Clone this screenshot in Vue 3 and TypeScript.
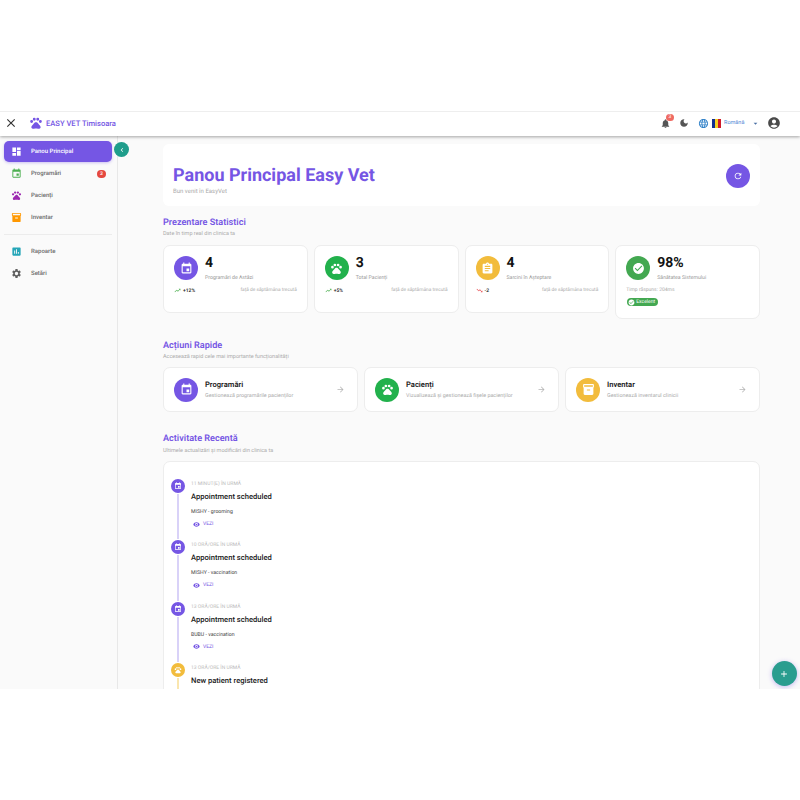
<script setup lang="ts">
const icons = {
  dashboard: 'M3 13h8V3H3v10zm0 8h8v-6H3v6zm10 0h8V11h-8v10zm0-18v6h8V3h-8z',
  event: 'M17 12h-5v5h5v-5zM16 1v2H8V1H6v2H5c-1.11 0-1.99.9-1.99 2L3 19c0 1.1.89 2 2 2h14c1.1 0 2-.9 2-2V5c0-1.1-.9-2-2-2h-1V1h-2zm3 18H5V8h14v11z',
  pets: 'M4.5 7a2.5 2.5 0 1 0 0 5 2.5 2.5 0 0 0 0-5zM9 3a2.5 2.5 0 1 0 0 5 2.5 2.5 0 0 0 0-5zM15 3a2.5 2.5 0 1 0 0 5 2.5 2.5 0 0 0 0-5zM19.5 7a2.5 2.5 0 1 0 0 5 2.5 2.5 0 0 0 0-5zM17.34 14.86c-.87-1.02-1.6-1.89-2.48-2.91-.46-.54-1.05-1.08-1.75-1.32-.11-.04-.22-.07-.33-.09-.25-.04-.52-.04-.78-.04s-.53 0-.79.05c-.11.02-.22.05-.33.09-.7.24-1.28.78-1.75 1.32-.87 1.02-1.6 1.89-2.48 2.91-1.31 1.31-2.92 2.76-2.62 4.79.29 1.02 1.02 2.03 2.33 2.32.73.15 3.06-.44 5.54-.44h.18c2.48 0 4.81.58 5.54.44 1.31-.29 2.04-1.31 2.33-2.32.31-2.04-1.3-3.49-2.61-4.8z',
  inventory: 'M20 2H4c-1 0-2 .9-2 2v3.01c0 .72.43 1.34 1 1.69V20c0 1.1 1.1 2 2 2h14c.9 0 2-.9 2-2V8.7c.57-.35 1-.97 1-1.69V4c0-1.1-1-2-2-2zm-5 12H9v-2h6v2zm5-7H4V4l16-.02V7z',
  assessment: 'M19 3H5c-1.1 0-2 .9-2 2v14c0 1.1.9 2 2 2h14c1.1 0 2-.9 2-2V5c0-1.1-.9-2-2-2zM9 17H7v-7h2v7zm4 0h-2V7h2v10zm4 0h-2v-4h2v4z',
  settings: 'M19.14 12.94c.04-.3.06-.61.06-.94 0-.32-.02-.64-.07-.94l2.03-1.58c.18-.14.23-.41.12-.61l-1.92-3.32c-.12-.22-.37-.29-.59-.22l-2.39.96c-.5-.38-1.03-.7-1.62-.94l-.36-2.54c-.04-.24-.24-.41-.48-.41h-3.84c-.24 0-.43.17-.47.41l-.36 2.54c-.59.24-1.13.57-1.62.94l-2.39-.96c-.22-.08-.47 0-.59.22L2.74 8.87c-.12.21-.08.47.12.61l2.03 1.58c-.05.3-.09.63-.09.94s.02.64.07.94l-2.03 1.58c-.18.14-.23.41-.12.61l1.92 3.32c.12.22.37.29.59.22l2.39-.96c.5.38 1.03.7 1.62.94l.36 2.54c.05.24.24.41.48.41h3.84c.24 0 .44-.17.47-.41l.36-2.54c.59-.24 1.13-.56 1.62-.94l2.39.96c.22.08.47 0 .59-.22l1.92-3.32c.12-.22.07-.47-.12-.61l-2.01-1.58zM12 15.6c-1.98 0-3.6-1.62-3.6-3.6s1.62-3.6 3.6-3.6 3.6 1.62 3.6 3.6-1.62 3.6-3.6 3.6z',
  close: 'M19 6.41L17.59 5 12 10.59 6.41 5 5 6.41 10.59 12 5 17.59 6.41 19 12 13.41 17.59 19 19 17.59 13.41 12z',
  bell: 'M12 22c1.1 0 2-.9 2-2h-4c0 1.1.89 2 2 2zm6-6v-5c0-3.07-1.64-5.64-4.5-6.32V4c0-.83-.67-1.5-1.5-1.5s-1.5.67-1.5 1.5v.68C7.63 5.36 6 7.92 6 11v5l-2 2v1h16v-1l-2-2z',
  moon: 'M12 3c-4.97 0-9 4.03-9 9s4.03 9 9 9 9-4.03 9-9c0-.46-.04-.92-.1-1.36-.98 1.37-2.58 2.26-4.4 2.26-2.98 0-5.4-2.42-5.4-5.4 0-1.81.89-3.42 2.26-4.4-.44-.06-.9-.1-1.36-.1z',
  globe: 'M11.99 2C6.47 2 2 6.48 2 12s4.47 10 9.99 10C17.52 22 22 17.52 22 12S17.52 2 11.99 2zm6.93 6h-2.95c-.32-1.25-.78-2.45-1.38-3.56 1.84.63 3.37 1.91 4.33 3.56zM12 4.04c.83 1.2 1.48 2.53 1.91 3.96h-3.82c.43-1.43 1.08-2.76 1.91-3.96zM4.26 14C4.1 13.36 4 12.69 4 12s.1-1.36.26-2h3.38c-.08.66-.14 1.32-.14 2 0 .68.06 1.34.14 2H4.26zm.82 2h2.95c.32 1.25.78 2.45 1.38 3.56-1.84-.63-3.37-1.9-4.33-3.56zm2.95-8H5.08c.96-1.66 2.49-2.93 4.33-3.56C8.81 5.55 8.35 6.75 8.03 8zM12 19.96c-.83-1.2-1.48-2.53-1.91-3.96h3.82c-.43 1.43-1.08 2.76-1.91 3.96zM14.34 14H9.66c-.09-.66-.16-1.32-.16-2 0-.68.07-1.35.16-2h4.68c.09.65.16 1.32.16 2 0 .68-.07 1.34-.16 2zm.25 5.56c.6-1.11 1.06-2.31 1.38-3.56h2.95c-.96 1.65-2.49 2.93-4.33 3.56zM16.36 14c.08-.66.14-1.32.14-2 0-.68-.06-1.34-.14-2h3.38c.16.64.26 1.31.26 2s-.1 1.36-.26 2h-3.38z',
  account: 'M12 2C6.48 2 2 6.48 2 12s4.48 10 10 10 10-4.48 10-10S17.52 2 12 2zm0 4c1.93 0 3.5 1.57 3.5 3.5S13.93 13 12 13s-3.5-1.57-3.5-3.5S10.07 6 12 6zm0 14c-2.03 0-4.43-.82-6.14-2.88C7.55 15.8 9.68 15 12 15s4.45.8 6.14 2.12C16.43 19.18 14.03 20 12 20z',
  refresh: 'M17.65 6.35C16.2 4.9 14.21 4 12 4c-4.42 0-7.99 3.58-7.99 8s3.57 8 7.99 8c3.73 0 6.84-2.55 7.73-6h-2.08c-.82 2.33-3.04 4-5.65 4-3.31 0-6-2.69-6-6s2.69-6 6-6c1.66 0 3.14.69 4.22 1.78L13 11h7V4l-2.35 2.35z',
  assignment: 'M19 3h-4.18C14.4 1.84 13.3 1 12 1c-1.3 0-2.4.84-2.82 2H5c-1.1 0-2 .9-2 2v14c0 1.1.9 2 2 2h14c1.1 0 2-.9 2-2V5c0-1.1-.9-2-2-2zm-7 0c.55 0 1 .45 1 1s-.45 1-1 1-1-.45-1-1 .45-1 1-1zm2 14H7v-2h7v2zm3-4H7v-2h10v2zm0-4H7V7h10v2z',
  check: 'M12 2C6.48 2 2 6.48 2 12s4.48 10 10 10 10-4.48 10-10S17.52 2 12 2zm-2 15l-5-5 1.41-1.41L10 14.17l7.59-7.59L19 8l-9 9z',
  up: 'M16 6l2.29 2.29-4.88 4.88-4-4L2 16.59 3.41 18l6-6 4 4 6.3-6.29L22 12V6z',
  down: 'M16 18l2.29-2.29-4.88-4.88-4 4L2 7.41 3.41 6l6 6 4-4 6.3 6.29L22 12v6z',
  arrow: 'M12 4l-1.41 1.41L16.17 11H4v2h12.17l-5.58 5.59L12 20l8-8z',
  eye: 'M12 4.5C7 4.5 2.73 7.61 1 12c1.73 4.39 6 7.5 11 7.5s9.27-3.11 11-7.5c-1.73-4.39-6-7.5-11-7.5zM12 17c-2.76 0-5-2.24-5-5s2.24-5 5-5 5 2.24 5 5-2.24 5-5 5zm0-8c-1.66 0-3 1.34-3 3s1.34 3 3 3 3-1.34 3-3-1.34-3-3-3z',
  chevron: 'M15.41 7.41L14 6l-6 6 6 6 1.41-1.41L10.83 12z',
  plus: 'M19 13h-6v6h-2v-6H5v-2h6V5h2v6h6v2z',
  caret: 'M7 10l5 5 5-5z'
};

const menuTop = [
  { label: 'Panou Principal', icon: icons.dashboard, color: '#ffffff', active: true },
  { label: 'Programări', icon: icons.event, color: '#4caf50', badge: '3' },
  { label: 'Pacienți', icon: icons.pets, color: '#9c27b0' },
  { label: 'Inventar', icon: icons.inventory, color: '#ff9800' }
];
const menuBottom = [
  { label: 'Rapoarte', icon: icons.assessment, color: '#26a6b8' },
  { label: 'Setări', icon: icons.settings, color: '#5f5f5f' }
];

const stats = [
  { value: '4', label: 'Programări de Astăzi', icon: icons.event, color: '#7556e4', trend: '+12%', up: true },
  { value: '3', label: 'Total Pacienți', icon: icons.pets, color: '#22b14c', trend: '+5%', up: true },
  { value: '4', label: 'Sarcini în Așteptare', icon: icons.assignment, color: '#f2bc3c', trend: '-2', up: false }
];

const actions = [
  { title: 'Programări', text: 'Gestionează programările pacienților', icon: icons.event, color: '#7556e4' },
  { title: 'Pacienți', text: 'Vizualizează și gestionează fișele pacienților', icon: icons.pets, color: '#22b14c' },
  { title: 'Inventar', text: 'Gestionează inventarul clinicii', icon: icons.inventory, color: '#f2bc3c' }
];

const activity = [
  { time: '11 minut(e) în urmă', title: 'Appointment scheduled', text: 'MISHY - grooming', icon: icons.event, color: '#7556e4', line: '#d9d2f8', link: true },
  { time: '10 oră/ore în urmă', title: 'Appointment scheduled', text: 'MISHY - vaccination', icon: icons.event, color: '#7556e4', line: '#d9d2f8', link: true },
  { time: '13 oră/ore în urmă', title: 'Appointment scheduled', text: 'BUBU - vaccination', icon: icons.event, color: '#7556e4', line: '#d9d2f8', link: true },
  { time: '13 oră/ore în urmă', title: 'New patient registered', text: '', icon: icons.pets, color: '#f2bc3c', line: '#fae6ae', link: false }
];
</script>

<template>
  <div class="page">
    <div class="app">
      <header class="topbar">
        <svg class="close" viewBox="0 0 24 24"><path :d="icons.close" /></svg>
        <svg class="logo" viewBox="0 0 24 24"><path :d="icons.pets" /></svg>
        <span class="brand">EASY VET Timisoara</span>
        <div class="tools">
          <div class="bell">
            <svg viewBox="0 0 24 24"><path :d="icons.bell" /></svg>
            <span class="bell-count">3</span>
          </div>
          <svg class="moon" viewBox="0 0 24 24"><path :d="icons.moon" /></svg>
          <svg class="globe" viewBox="0 0 24 24"><path :d="icons.globe" /></svg>
          <div class="flag"><i class="blue"></i><i class="yellow"></i><i class="red"></i></div>
          <span class="lang">Română</span>
          <svg class="caret" viewBox="0 0 24 24"><path :d="icons.caret" /></svg>
          <svg class="account" viewBox="0 0 24 24"><path :d="icons.account" /></svg>
        </div>
      </header>

      <div class="body">
        <aside class="sidebar">
          <nav class="menu">
            <a v-for="item in menuTop" :key="item.label" class="menu-item" :class="{ active: item.active }">
              <svg viewBox="0 0 24 24" :fill="item.color"><path :d="item.icon" /></svg>
              <span class="menu-label">{{ item.label }}</span>
              <span v-if="item.badge" class="menu-badge">{{ item.badge }}</span>
            </a>
          </nav>
          <div class="divider"></div>
          <nav class="menu">
            <a v-for="item in menuBottom" :key="item.label" class="menu-item">
              <svg viewBox="0 0 24 24" :fill="item.color"><path :d="item.icon" /></svg>
              <span class="menu-label">{{ item.label }}</span>
            </a>
          </nav>
          <button class="collapse">
            <svg viewBox="0 0 24 24"><path :d="icons.chevron" /></svg>
          </button>
        </aside>

        <main class="main">
          <section class="hero">
            <div>
              <h1>Panou Principal Easy Vet</h1>
              <p>Bun venit în EasyVet</p>
            </div>
            <button class="refresh">
              <svg viewBox="0 0 24 24"><path :d="icons.refresh" /></svg>
            </button>
          </section>

          <section class="block stats-block">
            <h2>Prezentare Statistici</h2>
            <p class="sub">Date în timp real din clinica ta</p>
            <div class="stats">
              <div v-for="s in stats" :key="s.label" class="card stat">
                <div class="stat-head">
                  <span class="round" :style="{ background: s.color }">
                    <svg viewBox="0 0 24 24"><path :d="s.icon" /></svg>
                  </span>
                  <div>
                    <div class="stat-value">{{ s.value }}</div>
                    <div class="stat-label">{{ s.label }}</div>
                  </div>
                </div>
                <div class="stat-foot">
                  <svg viewBox="0 0 24 24" :fill="s.up ? '#4caf50' : '#e5484d'"><path :d="s.up ? icons.up : icons.down" /></svg>
                  <span class="trend">{{ s.trend }}</span>
                  <span class="versus">față de săptămâna trecută</span>
                </div>
              </div>
              <div class="card stat">
                <div class="stat-head">
                  <span class="round health">
                    <svg viewBox="0 0 24 24"><path :d="icons.check" /></svg>
                  </span>
                  <div>
                    <div class="stat-value">98%</div>
                    <div class="stat-label">Sănătatea Sistemului</div>
                  </div>
                </div>
                <div class="response">Timp răspuns: 204ms</div>
                <span class="chip">
                  <svg viewBox="0 0 24 24"><path :d="icons.check" /></svg>
                  Excelent
                </span>
              </div>
            </div>
          </section>

          <section class="block actions-block">
            <h2>Acțiuni Rapide</h2>
            <p class="sub">Accesează rapid cele mai importante funcționalități</p>
            <div class="actions">
              <div v-for="a in actions" :key="a.title" class="card action">
                <span class="round" :style="{ background: a.color }">
                  <svg viewBox="0 0 24 24"><path :d="a.icon" /></svg>
                </span>
                <div class="action-text">
                  <div class="action-title">{{ a.title }}</div>
                  <div class="action-sub">{{ a.text }}</div>
                </div>
                <svg class="action-arrow" viewBox="0 0 24 24"><path :d="icons.arrow" /></svg>
              </div>
            </div>
          </section>

          <section class="block activity-block">
            <h2>Activitate Recentă</h2>
            <p class="sub">Ultimele actualizări și modificări din clinica ta</p>
            <div class="card activity">
              <div v-for="(row, i) in activity" :key="i" class="row">
                <div class="rail">
                  <span class="dot" :style="{ background: row.color }">
                    <svg viewBox="0 0 24 24"><path :d="row.icon" /></svg>
                  </span>
                  <span class="line" :style="{ background: row.line }"></span>
                </div>
                <div class="row-body">
                  <div class="row-time">{{ row.time }}</div>
                  <div class="row-title">{{ row.title }}</div>
                  <div v-if="row.text" class="row-text">{{ row.text }}</div>
                  <a v-if="row.link" class="row-link">
                    <svg viewBox="0 0 24 24"><path :d="icons.eye" /></svg>
                    VEZI
                  </a>
                </div>
              </div>
            </div>
          </section>
        </main>
      </div>

      <button class="fab">
        <svg viewBox="0 0 24 24"><path :d="icons.plus" /></svg>
      </button>
    </div>
  </div>
</template>

<style scoped>
.page {
  padding-top: 111px;
  height: 800px;
  box-sizing: border-box;
  background: #fff;
  font-family: Roboto, "Liberation Sans", sans-serif;
  text-rendering: geometricPrecision;
}
.app {
  position: relative;
  height: 578px;
  overflow: hidden;
  background: #fafafa;
  display: flex;
  flex-direction: column;
}
h1, h2, p { margin: 0; }
button { border: 0; padding: 0; cursor: pointer; }

.topbar {
  position: relative;
  z-index: 2;
  flex: none;
  height: 25px;
  box-sizing: border-box;
  display: flex;
  align-items: center;
  padding-bottom: 2px;
  background: #fff;
  border-top: 1px solid #eee;
  box-shadow: 0 1px 3px rgba(0, 0, 0, 0.35);
}
.close { width: 14px; height: 14px; margin-left: 4px; fill: #333; }
.logo { width: 14px; height: 14px; margin-left: 11px; fill: #7556e4; }
.brand { margin-left: 3px; font-size: 7.6px; font-weight: 500; color: #7556e4; }
.tools { margin-left: auto; display: flex; align-items: center; padding-right: 19px; }
.bell { position: relative; display: flex; }
.bell svg { width: 11px; height: 11px; fill: #555; }
.bell-count {
  position: absolute;
  top: -4px;
  left: 6.5px;
  width: 8px;
  height: 7px;
  border-radius: 4px;
  background: #ef6a62;
  color: #fff;
  font-size: 5px;
  line-height: 7px;
  text-align: center;
}
.moon { width: 10px; height: 10px; margin-left: 8.5px; fill: #555; }
.globe { width: 11px; height: 11px; margin-left: 8.5px; fill: #2f80c8; }
.flag { display: flex; width: 9px; height: 9px; margin-left: 3px; }
.flag i { flex: 1; }
.flag .blue { background: #12308f; }
.flag .yellow { background: #f7cf1e; }
.flag .red { background: #cf1b2b; }
.lang { margin-left: 3.5px; width: 20px; font-size: 5.5px; color: #4f86d6; }
.caret { width: 9px; height: 9px; margin-left: 6.5px; fill: #4a6fa5; }
.account { width: 14px; height: 14px; margin-left: 7.5px; fill: #4a4a4a; }

.body { flex: 1; display: flex; min-height: 0; }
.sidebar {
  position: relative;
  flex: none;
  width: 118px;
  box-sizing: border-box;
  padding: 5px 5px 0 4px;
  background: #fafafa;
  border-right: 1px solid #e8e8e8;
}
.menu { display: flex; flex-direction: column; gap: 1px; }
.menu-item {
  display: flex;
  align-items: center;
  height: 21px;
  padding-left: 7px;
  border-radius: 5px;
  color: #6b6b6b;
  font-size: 6px;
  font-weight: 500;
}
.menu-item svg { width: 11px; height: 11px; flex: none; }
.menu-label { margin-left: 9px; }
.menu-item.active { background: #7556e4; color: #fff; box-shadow: 0 1px 3px rgba(117, 86, 228, 0.35); }
.menu-badge {
  margin-left: auto;
  margin-right: 6px;
  width: 9px;
  height: 8px;
  border-radius: 4px;
  background: #e5483f;
  color: #fff;
  font-size: 5px;
  line-height: 8px;
  text-align: center;
}
.divider { height: 1px; margin: 6px 0; background: #ececec; }
.collapse {
  position: absolute;
  top: 6px;
  right: -12px;
  width: 15px;
  height: 15px;
  display: flex;
  align-items: center;
  justify-content: center;
  border-radius: 50%;
  background: #1f9d8b;
}
.collapse svg { width: 8px; height: 8px; fill: #fff; }

.main { flex: 1; min-width: 0; padding: 8px 40px 0 45px; overflow: hidden; }
.hero {
  height: 62px;
  box-sizing: border-box;
  display: flex;
  align-items: center;
  justify-content: space-between;
  padding: 10px 10px 0;
  background: #fff;
  border-radius: 6px;
}
.hero h1 { font-size: 18px; line-height: 22px; font-weight: 700; color: #7556e4; }
.hero p { font-size: 6px; line-height: 8px; margin-top: 1px; color: #aaa; }
.refresh {
  width: 24px;
  height: 24px;
  margin-bottom: 8px;
  display: flex;
  align-items: center;
  justify-content: center;
  border-radius: 50%;
  background: #7556e4;
}
.refresh svg { width: 10px; height: 10px; fill: #fff; }

.block h2 { font-size: 9.1px; line-height: 13px; font-weight: 600; color: #7556e4; }
.sub { font-size: 5.5px; line-height: 8px; color: #aaa; }
.stats-block { margin-top: 11px; }
.actions-block { margin-top: 21px; }
.activity-block { margin-top: 21px; }
.activity-block .sub { margin-top: 1px; }

.card {
  background: #fff;
  border: 1px solid #ededed;
  border-radius: 7px;
  box-sizing: border-box;
}
.round {
  flex: none;
  width: 24px;
  height: 24px;
  display: flex;
  align-items: center;
  justify-content: center;
  border-radius: 50%;
}
.round svg { width: 13px; height: 13px; fill: #fff; }
.round.health { background: #43a851; }

.stats {
  margin-top: 7px;
  display: grid;
  grid-template-columns: repeat(4, 1fr);
  gap: 6px;
  align-items: start;
}
.stat { height: 68px; padding: 10px 10px 0; }
.stat:last-child { height: 74px; }
.stat-head { display: flex; gap: 7px; }
.stat-value { font-size: 14px; line-height: 15px; font-weight: 700; color: #111; }
.stat-label { margin-top: 3px; font-size: 5.2px; line-height: 8px; color: #999; }
.stat-foot { display: flex; align-items: center; margin-top: 5px; }
.stat-foot svg { width: 7px; height: 7px; }
.trend { margin-left: 2px; font-size: 5px; font-weight: 500; color: #222; }
.versus { margin-left: auto; font-size: 4.8px; color: #aaa; }
.response { margin-top: 5px; font-size: 5px; line-height: 7px; color: #aaa; }
.chip {
  margin-top: 4px;
  margin-left: 1px;
  display: flex;
  width: fit-content;
  align-items: center;
  gap: 1px;
  height: 8px;
  padding: 0 3px 0 1px;
  border-radius: 4px;
  background: #43a851;
  color: #fff;
  font-size: 5px;
}
.chip svg { width: 7px; height: 7px; fill: #fff; }

.actions {
  margin-top: 6px;
  display: grid;
  grid-template-columns: repeat(3, 1fr);
  gap: 6px;
}
.action {
  height: 45px;
  display: flex;
  align-items: center;
  padding: 0 12px 0 10px;
}
.action-text { flex: 1; margin-left: 7px; }
.action-title { font-size: 7.6px; line-height: 10px; font-weight: 600; color: #1a1a1a; }
.action-sub { margin-top: 2px; font-size: 5.4px; line-height: 8px; color: #aaa; }
.action-arrow { width: 9px; height: 9px; fill: #b5b5b5; }

.activity { margin-top: 6px; height: 260px; padding: 17px 0 0 7px; }
.row { display: flex; height: 61.3px; }
.rail { flex: none; width: 14px; display: flex; flex-direction: column; align-items: center; }
.dot {
  flex: none;
  width: 14px;
  height: 14px;
  display: flex;
  align-items: center;
  justify-content: center;
  border-radius: 50%;
}
.dot svg { width: 8px; height: 8px; fill: #fff; }
.line { flex: 1; width: 1.5px; margin: 1px 0; }
.row-body { margin-left: 6px; padding-top: 2px; }
.row-time { font-size: 5px; line-height: 7px; text-transform: uppercase; color: #bbb; }
.row-title { margin-top: 4px; font-size: 7.6px; line-height: 10px; font-weight: 500; color: #1a1a1a; }
.row-text { margin-top: 6px; font-size: 5.2px; line-height: 8px; color: #444; }
.row-link {
  margin: 4px 0 0 2px;
  display: flex;
  align-items: center;
  gap: 3px;
  font-size: 5px;
  line-height: 8px;
  color: #7556e4;
}
.row-link svg { width: 7px; height: 7px; fill: #7556e4; }

.fab {
  position: absolute;
  right: 3.5px;
  bottom: 3px;
  z-index: 3;
  width: 25px;
  height: 25px;
  display: flex;
  align-items: center;
  justify-content: center;
  border-radius: 50%;
  background: #2a9d8f;
  box-shadow: 0 1px 5px rgba(117, 86, 228, 0.4);
}
.fab svg { width: 10px; height: 10px; fill: #fff; }
</style>

<style>
html, body { background: #fff; }
</style>
